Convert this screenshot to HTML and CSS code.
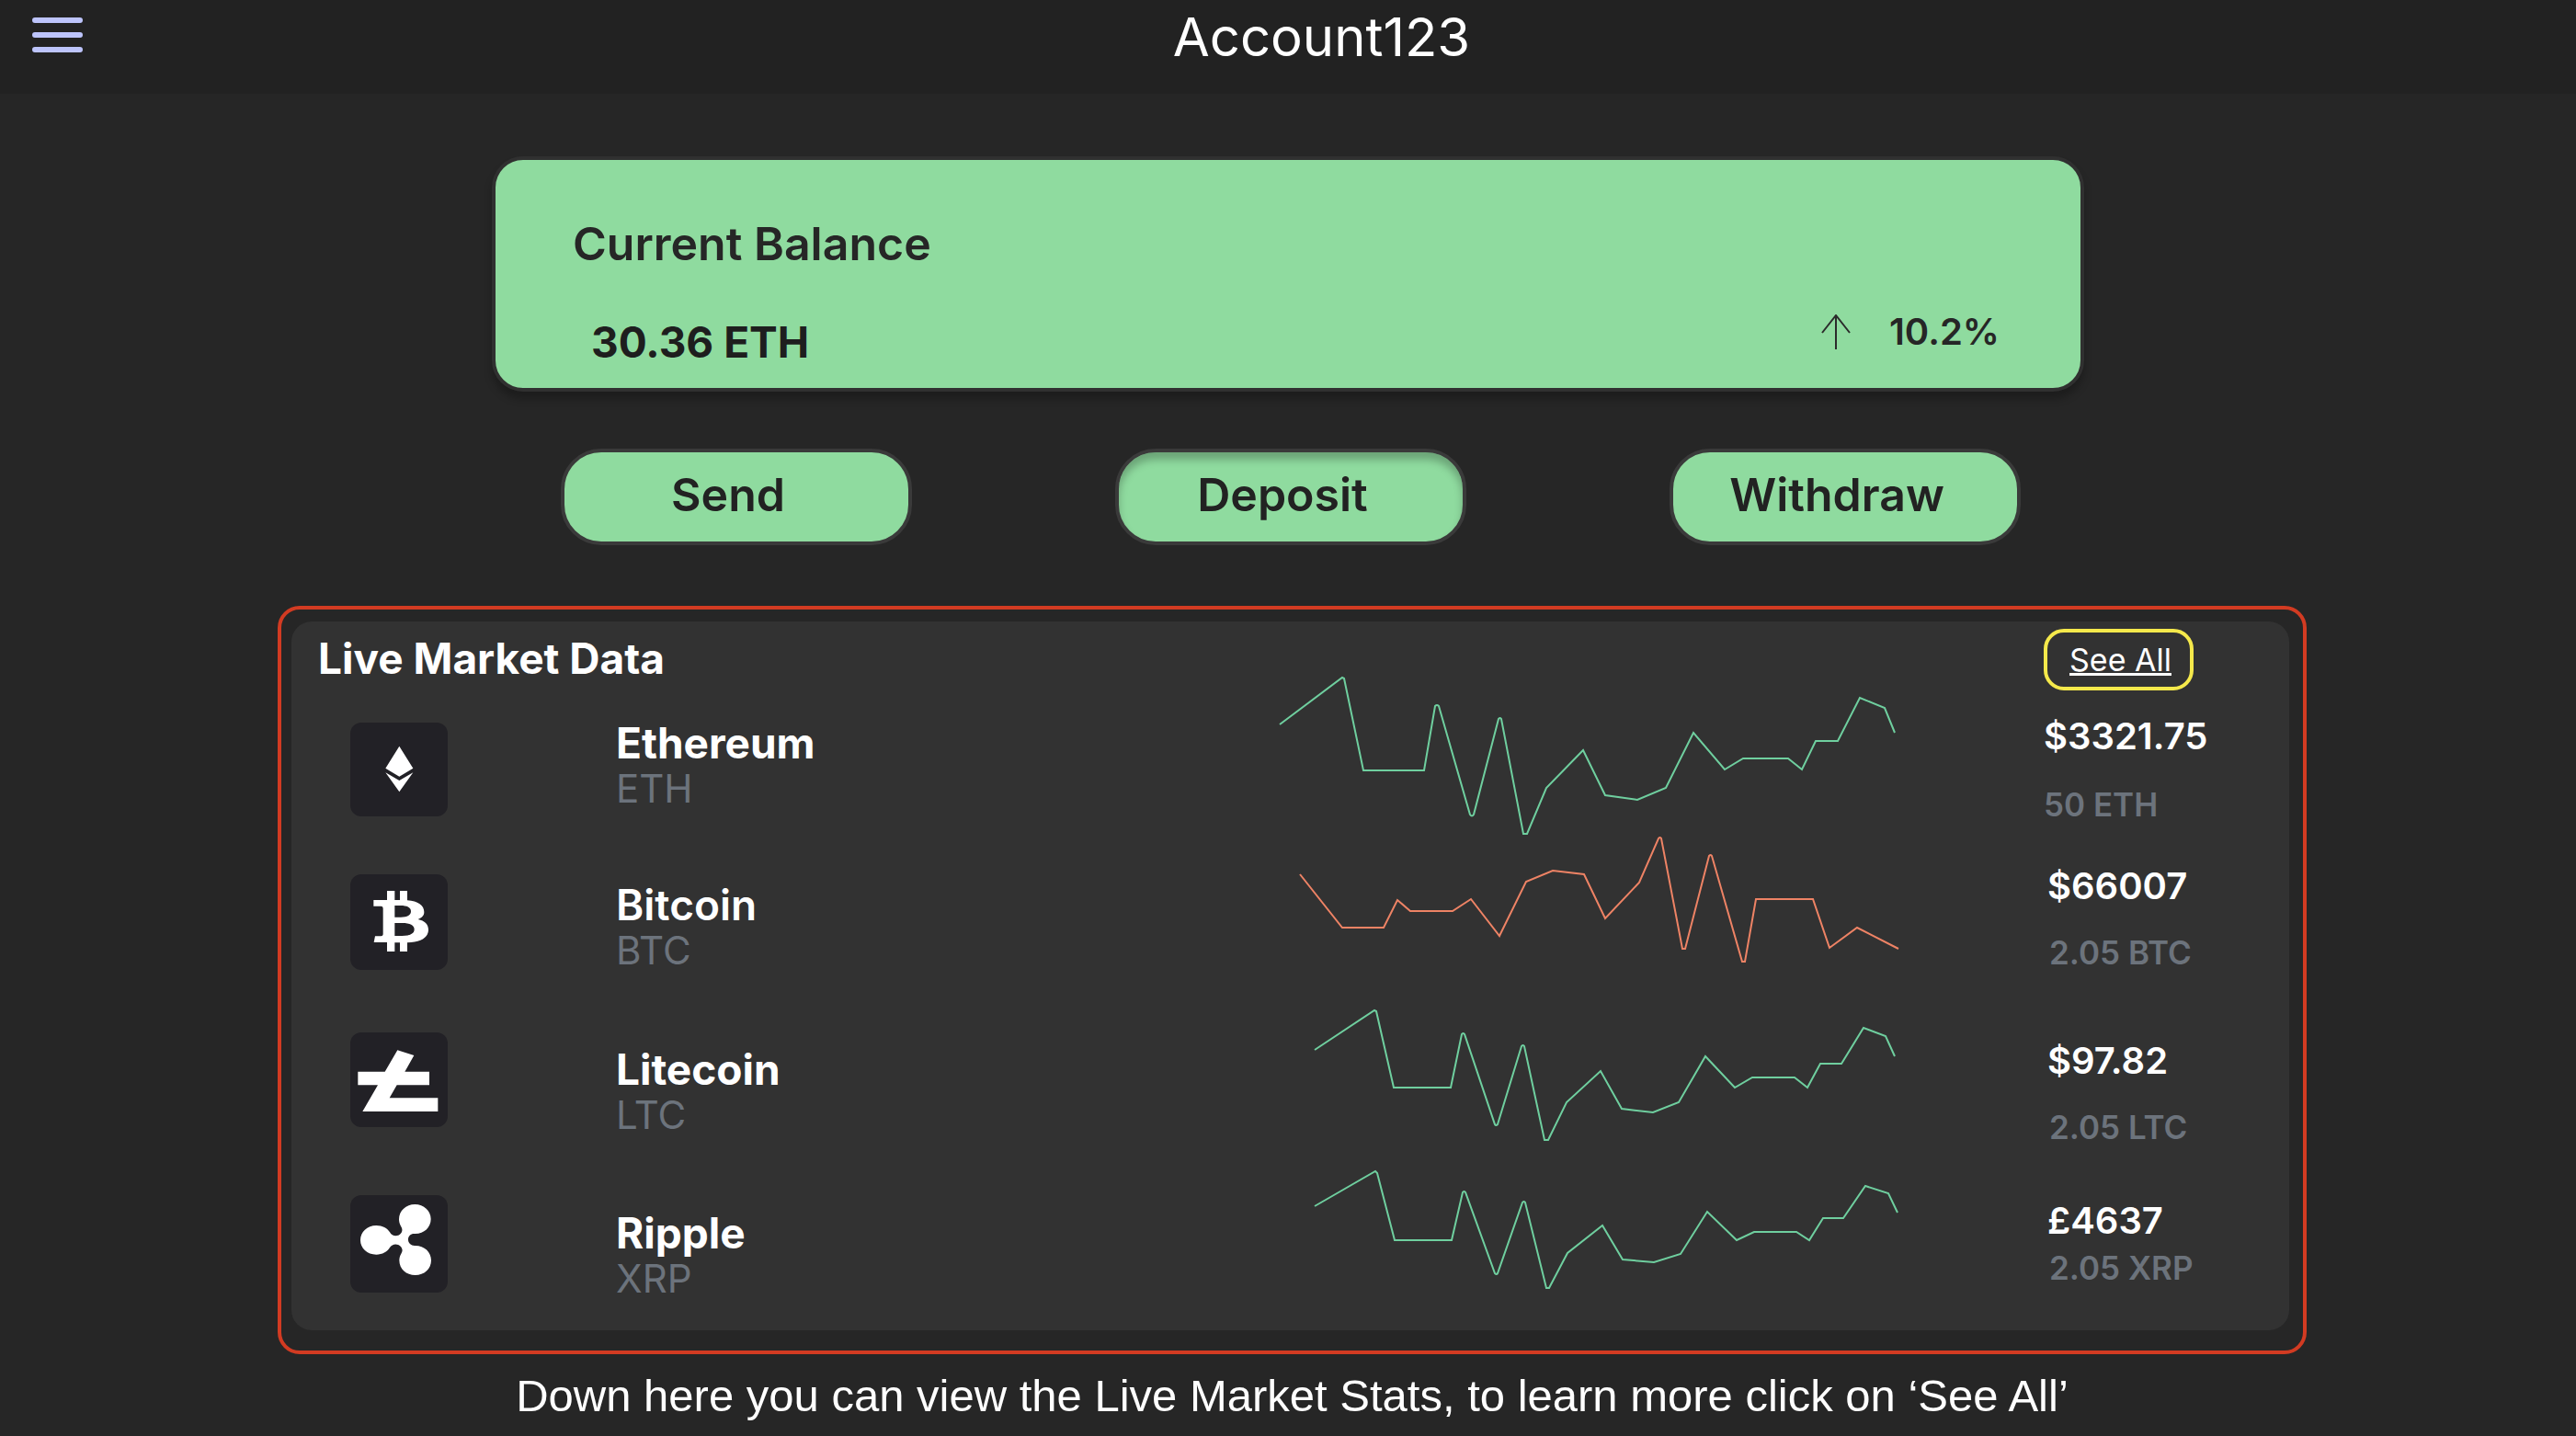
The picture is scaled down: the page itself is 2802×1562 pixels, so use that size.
FILE: index.html
```html
<!DOCTYPE html>
<html lang="en">
<head>
<meta charset="utf-8">
<title>Account123</title>
<link rel="stylesheet" href="styles.css">
</head>
<body>
<header class="topbar">
  <button class="menu" type="button" aria-label="Menu">
    <svg width="55" height="38" viewBox="0 0 55 38" fill="none" stroke="#bdc4fb" stroke-width="6" stroke-linecap="round"><path d="M3 3h49M3 19h49M3 35h49"/></svg>
  </button>
  <h1 class="account">Account123</h1>
</header>
<main class="page">
  <section class="balance">
    <h2 class="balance-title">Current Balance</h2>
    <div class="balance-row">
      <span class="balance-value">30.36 ETH</span>
      <span class="balance-change">
        <svg width="32" height="38" viewBox="0 0 32 38" fill="none" stroke="#2b2b2b" stroke-width="2"><path d="M16 38V1M1 20L16 1l15 19"/></svg>
        10.2%
      </span>
    </div>
  </section>
  <div class="actions">
    <button class="action" type="button">Send</button>
    <button class="action pressed" type="button">Deposit</button>
    <button class="action" type="button">Withdraw</button>
  </div>
  <section class="highlight">
    <div class="market">
      <div class="market-head">
        <h2 class="market-title">Live Market Data</h2>
        <a class="see-all" href="#market">See All</a>
      </div>
      <table class="coins">
        <tr class="coin eth">
          <td class="logo"><svg class="tile" width="106" height="102" viewBox="33 33 318 306" fill="#fff"><path d="M193 110l45 72-45 27-45-27zM148 196l45 26 45-26-45 63z"/></svg></td>
          <td class="name"><b>Ethereum</b><span>ETH</span></td>
          <td class="trend"><svg width="720" height="200" viewBox="0 0 720 200"><path d="M22 78L90 27 92 28 113 128H179L191 58Q193 56 195 58L229 176Q231 179 233 176L260 72Q262 70 263 72L287 197H291L312 147 352 106 376 155 411 160 442 147 472 87 506 127 526 115H575L590 127 605 96H629L653 49 680 60 691 87"/></svg></td>
          <td class="price"><b>$3321.75</b><span>50 ETH</span></td>
        </tr>
        <tr class="coin btc">
          <td class="logo"><svg class="tile" width="106" height="104" viewBox="33 528 318 312" fill="#fff"><path fill-rule="evenodd" d="M153 582h25v30h17v-30h24v31c35 2 55 17 55 38 0 12-7 19-20 24 22 4 34 17 34 34 0 26-26 41-69 42v29h-24v-29h-17v29h-25v-30h-43l4-20h19q7 0 7-7v-84q0-7-7-7h-24v-20h44zM178 630v38h20c22 0 33-7 33-19 0-13-13-19-34-19zM178 687v42h24c27 0 40-8 40-21 0-14-14-21-40-21z"/></svg></td>
          <td class="name"><b>Bitcoin</b><span>BTC</span></td>
          <td class="trend falling"><svg width="720" height="160" viewBox="0 200 720 160"><path d="M44 241L90 299H135L150 269 164 281H210L230 268 261 308 290 249 319 237 353 241 376 289 413 250 434 202Q436 200 437 202L460 322H463L489 221Q491 219 492 221L525 336H528L540 268H602L620 321 650 299 695 322"/></svg></td>
          <td class="price"><b>$66007</b><span>2.05 BTC</span></td>
        </tr>
        <tr class="coin ltc">
          <td class="logo"><svg class="tile" width="106" height="103" viewBox="33 24 318 309" fill="#fff"><path d="M187 82l54 17-30 53h80v44H185l-24 42h158v44H73l50-86H58v-44h88z"/></svg></td>
          <td class="name"><b>Litecoin</b><span>LTC</span></td>
          <td class="trend"><svg width="720" height="180" viewBox="0 0 720 180"><path d="M60 72L125 29 127 30 146 113H208L220 55Q222 53 223 55L256 153Q257 155 259 153L285 68Q287 66 288 68L310 170H314L334 129 371 95 394 136 428 140 456 129 485 79 517 113 536 102H582L596 113 610 87H633L657 48 681 57 691 79"/></svg></td>
          <td class="price"><b>$97.82</b><span>2.05 LTC</span></td>
        </tr>
        <tr class="coin xrp">
          <td class="logo"><svg class="tile" width="106" height="106" viewBox="33 555 318 318" fill="#fff"><path d="M118 654c20 0 36 9 44 22 7 14 26 15 35 5 8-9 6-17 1-25-4-7-6-15-6-22 0-28 23-49 52-49s52 21 52 48c0 28-23 49-53 48-12-1-21 7-21 19s9 20 21 20c31-1 54 20 54 48s-23 48-52 48-52-20-52-48c0-8 2-15 6-22 5-8 6-15-2-24-10-10-27-9-35 4-9 14-24 23-44 23-30 0-52-21-52-47 0-27 22-48 52-48z"/></svg></td>
          <td class="name"><b>Ripple</b><span>XRP</span></td>
          <td class="trend"><svg width="720" height="150" viewBox="0 200 720 150"><path d="M60 242L126 204 128 206 147 279H209L221 227Q223 225 224 227L256 315Q258 317 259 315L286 238Q288 236 289 238L312 331H315L335 293 373 263 395 300 429 303 458 294 487 248 519 279 538 270H584L598 279 613 255H635L659 220 684 228 694 249"/></svg></td>
          <td class="price"><b>£4637</b><span>2.05 XRP</span></td>
        </tr>
      </table>
    </div>
  </section>
  <p class="hint">Down here you can view the Live Market Stats, to learn more click on ‘See All’</p>
</main>
</body>
</html>
```
FILE: styles.css
```css
* { box-sizing: border-box; }
body {
  margin: 0;
  background: #262626;
  color: #fff;
  font-family: Inter, "Liberation Sans", sans-serif;
}
h1, h2, p { margin: 0; }
svg { display: block; }

.topbar {
  display: flex;
  align-items: flex-start;
  height: 102px;
  padding: 0 17px 0 35px;
  background: #222;
}
.menu {
  margin-top: 19px;
  padding: 0;
  border: 0;
  background: none;
}
.account {
  flex: 1;
  text-align: center;
  font-size: 58px;
  line-height: 80px;
  font-weight: 400;
}

.page { padding: 68px 293px 0 302px; }

.balance {
  margin: 0 242px 0 233px;
  padding: 59px 88px 18px 84px;
  border: 4px solid #303030;
  border-radius: 34px;
  background: #8fdb9f;
  color: #262626;
  box-shadow: 0 8px 8px rgba(0, 0, 0, .25);
}
.balance-title {
  font-size: 50px;
  line-height: 64px;
  font-weight: 600;
}
.balance-row {
  display: flex;
  justify-content: space-between;
  align-items: flex-start;
  margin-top: 43px;
  padding-left: 20px;
}
.balance-value {
  font-size: 46px;
  line-height: 64px;
  font-weight: 700;
  color: #1e1e1e;
}
.balance-change {
  display: flex;
  align-items: center;
  gap: 42px;
  font-size: 40px;
  line-height: 42px;
  font-weight: 600;
}

.actions {
  display: flex;
  justify-content: space-between;
  margin: 62px 311px 0 308px;
}
.action {
  width: 382px;
  height: 105px;
  padding: 0 18px 6px 0;
  border: 4px solid #3a3a3a;
  border-radius: 44px;
  background: #8fdb9f;
  color: #222;
  font: 600 50px/64px Inter, "Liberation Sans", sans-serif;
}
.pressed { box-shadow: inset 0 8px 8px rgba(0, 0, 0, .25); }

.highlight {
  margin-top: 66px;
  padding: 13px 15px 22px 11px;
  border: 4px solid #d23b22;
  border-radius: 24px;
}
.market {
  border-radius: 22px;
  background: #323232;
}
.market-head {
  display: flex;
  justify-content: space-between;
  align-items: flex-start;
  height: 89px;
  padding: 0 104px 0 29px;
}
.market-title {
  font-size: 46px;
  line-height: 80px;
  font-weight: 700;
}
.see-all {
  width: 163px;
  margin-top: 8px;
  padding-left: 4px;
  border: 4px solid #f5e94b;
  border-radius: 22px;
  text-align: center;
  font-size: 34px;
  line-height: 59px;
  color: #fff;
  text-decoration-thickness: 3px;
}

.coins {
  width: 100%;
  table-layout: fixed;
  border-collapse: collapse;
}
.coins td {
  padding: 0;
  vertical-align: top;
}
.coins .logo {
  width: 353px;
  padding: 21px 0 0 64px;
}
.tile {
  border-radius: 12px;
  background: #222126;
}
.name b, .name span, .price b, .price span { display: block; }
.name b { font-size: 46px; line-height: 56px; font-weight: 700; }
.btc .name b { font-weight: 600; }
.name span { font-size: 42px; line-height: 44px; color: #6c737c; }
.coins .trend { width: 853px; }
.trend path {
  fill: none;
  stroke: #6fcf9f;
  stroke-width: 2;
}
.falling path { stroke: #ee8365; }
.coins .price { width: 267px; }
.price b { font-size: 40px; line-height: 48px; font-weight: 600; }
.price span { font-size: 35px; line-height: 44px; font-weight: 600; color: #6c737c; }

.eth { height: 165px; }
.btc { height: 172px; }
.ltc { height: 177px; }
.xrp { height: 168px; }
.coins .eth .name { padding-top: 15px; }
.coins .btc .name { padding-top: 26px; }
.coins .ltc .name { padding-top: 33px; }
.coins .xrp .name { padding-top: 34px; }
.eth .trend svg { margin: -55px 0 -20px; }
.btc .trend svg { margin: -20px 0 0; }
.ltc .trend svg { margin: -32px 0 0; }
.xrp .trend svg { margin: -9px 0 0; }
.coins .eth .price { padding-top: 12px; }
.coins .btc .price { padding: 10px 0 0 4px; }
.coins .ltc .price { padding: 28px 0 0 4px; }
.coins .xrp .price { padding: 25px 0 0 4px; }
.eth .price span { margin-top: 28px; }
.btc .price span, .ltc .price span { margin: 26px 0 0 2px; }
.xrp .price span { margin: 5px 0 0 2px; }

.hint {
  padding: 17px 0 9px;
  text-align: center;
  font-family: "Liberation Sans", Arial, sans-serif;
  font-size: 49px;
  line-height: 56px;
}
```
